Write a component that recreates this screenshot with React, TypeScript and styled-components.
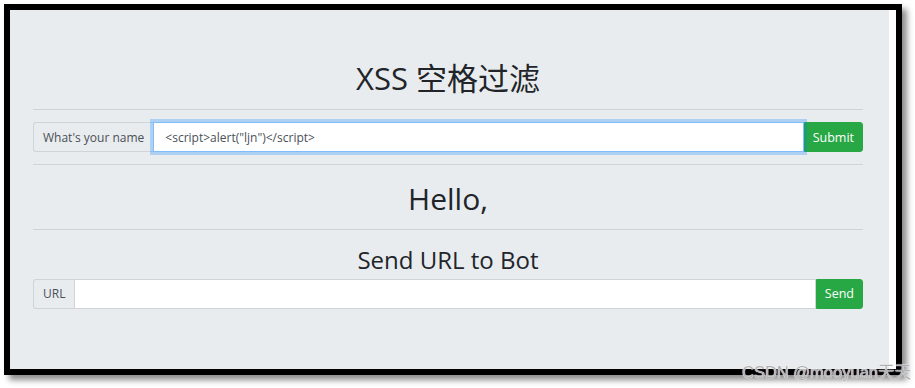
import React, { useState } from 'react';
import styled, { createGlobalStyle } from 'styled-components';

const GlobalStyle = createGlobalStyle`
  html, body {
    margin: 0;
    padding: 0;
    background: #ffffff;
  }
  body {
    font-family: "Open Sans", "Noto Sans CJK SC", sans-serif;
    color: #212529;
  }
`;

const Page = styled.div`
  position: relative;
  width: 915px;
  height: 388px;
  padding: 4px;
  box-sizing: border-box;
`;

const Frame = styled.div`
  width: 898px;
  height: 371px;
  box-sizing: border-box;
  border: 6px solid #000000;
  background: #ffffff;
  box-shadow: 5px 5px 6px rgba(0, 0, 0, 0.45);
`;

const Jumbotron = styled.div`
  width: 879px;
  height: 100%;
  box-sizing: border-box;
  background: #e9ecef;
  padding: 50px 26px 0 23px;
`;

const Title = styled.h1<{ size: number }>`
  margin: 0;
  font-size: ${(p) => p.size}px;
  line-height: 1.2;
  font-weight: 400;
  text-align: center;
  color: #212529;
`;

const Greeting = styled(Title)`
  padding-top: 4px;
`;

const SubTitle = styled(Title)`
  margin: 16px 0 4px;
`;

const Rule = styled.hr`
  margin: 12px 0;
  border: 0;
  border-top: 1px solid rgba(0, 0, 0, 0.1);
`;

const InputGroup = styled.div`
  display: flex;
  height: 30px;
`;

const Addon = styled.span`
  display: flex;
  align-items: center;
  padding: 0 9px;
  font-size: 12px;
  color: #495057;
  background: #e9ecef;
  border: 1px solid #ced4da;
  border-right: 0;
  border-radius: 3px 0 0 3px;
`;

const TextInput = styled.input<{ focused?: boolean }>`
  flex: 1;
  min-width: 0;
  height: 30px;
  box-sizing: border-box;
  padding: 0 11px;
  font-family: inherit;
  font-size: 12px;
  color: #495057;
  background: #ffffff;
  border: 1px solid ${(p) => (p.focused ? '#80bdff' : '#ced4da')};
  border-radius: 0;
  outline: none;
  box-shadow: ${(p) => (p.focused ? '0 0 0 3px rgba(0, 123, 255, 0.25)' : 'none')};
  position: relative;
  z-index: 1;
`;

const GreenButton = styled.button`
  height: 30px;
  padding: 0 8px;
  font-family: inherit;
  font-size: 12.5px;
  color: #ffffff;
  background: #28a745;
  border: 1px solid #28a745;
  border-radius: 0 3px 3px 0;
`;

const Watermark = styled.div`
  position: absolute;
  right: 4px;
  bottom: 5px;
  font-family: "Liberation Sans", "Noto Sans CJK SC", sans-serif;
  font-size: 16.5px;
  color: #b0b0b0;
  text-shadow: 0 0 1px #ffffff, 0 0 1px #ffffff;
`;

const App = () => {
  const [name, setName] = useState('<script>alert("ljn")</script>');
  const [url, setUrl] = useState('');

  return (
    <Page>
      <GlobalStyle />
      <Frame>
        <Jumbotron>
          <Title size={31}>XSS 空格过滤</Title>
          <Rule />
          <InputGroup>
            <Addon>What's your name</Addon>
            <TextInput focused value={name} onChange={(e) => setName(e.target.value)} />
            <GreenButton>Submit</GreenButton>
          </InputGroup>
          <Rule />
          <Greeting size={30}>Hello,</Greeting>
          <Rule />
          <SubTitle size={24}>Send URL to Bot</SubTitle>
          <InputGroup>
            <Addon>URL</Addon>
            <TextInput value={url} onChange={(e) => setUrl(e.target.value)} />
            <GreenButton>Send</GreenButton>
          </InputGroup>
        </Jumbotron>
      </Frame>
      <Watermark>CSDN @mooyuan天天</Watermark>
    </Page>
  );
};

export default App;
